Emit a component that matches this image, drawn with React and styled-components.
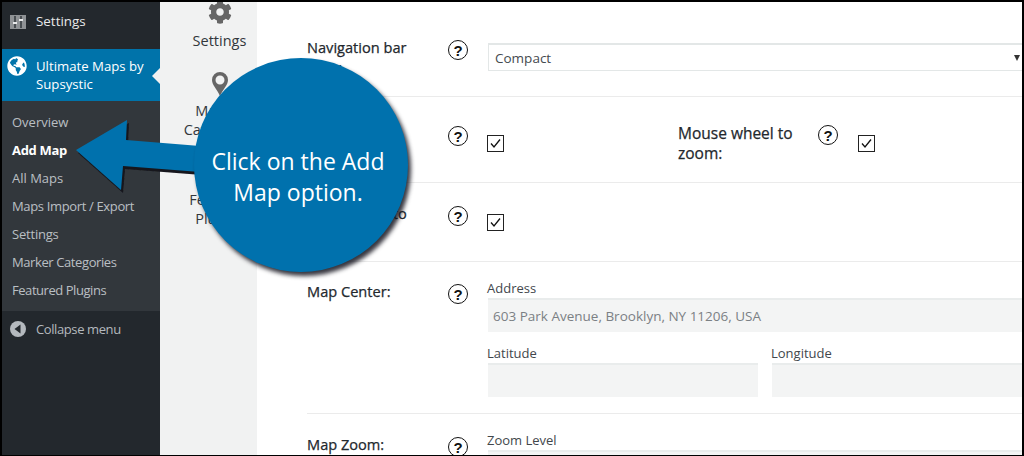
import styled, { createGlobalStyle } from 'styled-components';
import { FaCog, FaGlobeAmericas, FaStar } from 'react-icons/fa';

const Global = createGlobalStyle`
  * { box-sizing: border-box; }
  html, body { margin: 0; padding: 0; background: #fff; overflow: hidden; }
  body { font-family: "Open Sans", "Noto Sans", sans-serif; }
`;

// Outer frame with the black screenshot border
const Frame = styled.div`
  position: relative;
  width: 1024px;
  height: 456px;
  border: 2px solid #000;
  border-bottom-width: 1px;
  display: flex;
  overflow: hidden;
  background: #fff;
`;

const Sidebar = styled.nav`
  width: 158px;
  flex: none;
  background: #23282d;
  color: #eee;
  font-size: 13px;
`;

const TopItem = styled.div`
  height: 47px;
  display: flex;
  align-items: flex-start;
  padding: 10px 0 0 8px;
  gap: 10px;
  line-height: 18px;
  font-size: 13.400px;
  color: #e8e9ea;
`;

const ActiveItem = styled.div`
  position: relative;
  height: 52px;
  background: #0073aa;
  color: #fff;
  display: flex;
  padding: 8px 8px 0 5px;
  gap: 9px;
  line-height: 18px;
  font-size: 13.200px;
  svg { flex: none; margin-top: -1px; }
  &::after {
    content: "";
    position: absolute;
    right: 0;
    top: 19px;
    border: 8px solid transparent;
    border-right-color: #f1f1f1;
  }
`;

const SubMenu = styled.div`
  height: 210px;
  background: #32373c;
  padding: 7px 0;
`;

const SubItem = styled.div`
  height: 28px;
  line-height: 28px;
  padding-left: 10px;
  font-size: 13px;
  letter-spacing: ${p => p.$track || 0}px;
  font-weight: ${p => (p.$active ? 700 : 400)};
  color: ${p => (p.$active ? '#fff' : 'rgba(240,245,250,.72)')};
`;

const Collapse = styled.div`
  display: flex;
  align-items: center;
  gap: 10px;
  padding: 9px 0 0 8px;
  line-height: 18px;
  letter-spacing: -0.4px;
  color: #b4b9be;
`;

const SubNav = styled.aside`
  width: 97px;
  flex: none;
  background: #f1f2f2;
  font-size: 14.500px;
  line-height: 18.500px;
  text-align: center;
  padding-left: 22px;
`;

const NavEntry = styled.div`
  height: ${p => p.$h}px;
  margin-top: ${p => p.$top || 0}px;
  display: flex;
  flex-direction: column;
  align-items: center;
  color: #32373c;
  svg { color: #666; flex: none; }
`;

const NavLabel = styled.div`
  margin-top: ${p => p.$gap}px;
`;

const Main = styled.main`
  flex: 1;
  min-width: 0;
  padding-left: 50px;
  color: #23282d;
  font-size: 14.600px;
`;

const Row = styled.section`
  height: ${p => p.$h}px;
  padding-top: ${p => p.$pad}px;
  display: flex;
  border-bottom: ${p => (p.$last ? 'none' : '1px solid #ebebeb')};
`;

const Label = styled.div`
  width: 141px;
  flex: none;
  margin-top: ${p => p.$top || 0}px;
  line-height: 20px;
  color: #23282d;
  -webkit-text-stroke: 0.25px #23282d;
`;

const Help = styled.span`
  width: 20px;
  height: 20px;
  flex: none;
  margin-top: ${p => p.$top || 3}px;
  border: 1.500px solid #111;
  border-radius: 50%;
  display: flex;
  align-items: center;
  justify-content: center;
  font-family: "Liberation Sans", sans-serif;
  font-size: 15px;
  font-weight: 700;
  color: #111;
`;

const Control = styled.div`
  flex: 1;
  min-width: 0;
  margin-left: ${p => p.$left ?? 20}px;
  font-size: 13px;
`;

const Select = styled.div`
  height: 28px;
  margin-top: 6px;
  border: 1px solid #e3e7e7;
  border-top-width: 2px;
  border-right: none;
  padding-left: 6px;
  display: flex;
  align-items: center;
  justify-content: space-between;
  font-size: 13.500px;
  color: #454a4f;
`;

const Caret = styled.span`
  width: 0;
  height: 0;
  margin-right: 2px;
  border: 3.500px solid transparent;
  border-top: 6px solid #333;
  border-bottom: none;
`;

const CheckRow = styled.div`
  display: flex;
  align-items: flex-start;
`;

const Check = styled.span`
  width: 17px;
  height: 17px;
  flex: none;
  margin-top: ${p => p.$top}px;
  margin-left: ${p => p.$left || 0}px;
  border: 1px solid #222;
  background: #fff;
  display: flex;
  align-items: center;
  justify-content: center;
`;

const SideLabel = styled(Label)`
  width: 140px;
  margin-left: 174px;
  font-size: 15.500px;
`;

const FieldLabel = styled.div`
  margin-left: -1px;
  font-size: 13px;
  line-height: 18px;
  color: #42474c;
`;

const Field = styled.div`
  height: 34px;
  margin-top: 1px;
  background: #f3f4f4;
  border-top: 2px solid #e9ecec;
  padding: 0 0 0 5px;
  line-height: 33px;
  font-size: 13.500px;
  color: #7b8084;
`;

const Pair = styled.div`
  display: grid;
  grid-template-columns: 270px 1fr;
  column-gap: 14px;
  margin-top: 12px;
`;

// Callout drawn over the page
const Callout = styled.div`
  position: absolute;
  left: 192px;
  top: 56px;
  width: 214px;
  height: 214px;
  border-radius: 50%;
  background: #0071ad;
  box-shadow: 3px 4px 4px rgba(20, 20, 30, .85);
  display: flex;
  align-items: center;
  justify-content: center;
  text-align: center;
  color: #fff;
  font-size: 23px;
  line-height: 31px;
  padding: 24px 6px 0 0;
`;

const ArrowArt = styled.svg`
  position: absolute;
  left: -2px;
  top: -2px;
`;

function SettingsGlyph() {
  return (
    <svg width="16" height="14" viewBox="0 0 16 14" style={{ marginTop: 3 }}>
      <rect width="16" height="14" fill="#8f9295" />
      <path d="M5 1v12M11 1v12" stroke="#33383d" strokeWidth="1.500" />
      <path d="M3 8h4M9 5h4" stroke="#e8e9ea" strokeWidth="2" />
    </svg>
  );
}

function PinGlyph() {
  return (
    <svg width="16" height="24" viewBox="0 0 16 24">
      <path fillRule="evenodd" fill="#666" d="M8 0a8 8 0 0 1 8 8c0 5-5 9-8 16C5 17 0 13 0 8a8 8 0 0 1 8-8Zm0 3.500a4.500 4.500 0 1 0 0 9 4.500 4.500 0 0 0 0-9Z" />
    </svg>
  );
}

function CollapseGlyph() {
  return (
    <svg width="16" height="16" viewBox="0 0 16 16">
      <circle cx="8" cy="8" r="8" fill="#b4b9be" />
      <path d="M10.500 3.500v9L4.500 8Z" fill="#23282d" />
    </svg>
  );
}

function Tick() {
  return (
    <svg width="13" height="13" viewBox="0 0 13 13">
      <path d="M2 6.500 5 10 11 2.500" fill="none" stroke="#111" strokeWidth="1.300" />
    </svg>
  );
}

const arrow = 'M76 150 127 120 126 140 200 146 200 172 123 166 121 190Z';

function Arrow() {
  return (
    <ArrowArt width="240" height="220" viewBox="0 0 240 220">
      <defs>
        <filter id="soft"><feGaussianBlur stdDeviation="0.7" /></filter>
      </defs>
      <path d={arrow} fill="#15151c" transform="translate(2 3)" filter="url(#soft)" />
      <path d={arrow} fill="#0071ad" />
    </ArrowArt>
  );
}

export default function App() {
  return (
    <>
      <Global />
      <Frame>
        <Sidebar>
          <TopItem><SettingsGlyph />Settings</TopItem>
          <ActiveItem>
            <FaGlobeAmericas size={20} />
            <span>Ultimate Maps by Supsystic</span>
          </ActiveItem>
          <SubMenu>
            <SubItem>Overview</SubItem>
            <SubItem $active $track={-0.3}>Add Map</SubItem>
            <SubItem>All Maps</SubItem>
            <SubItem $track={-0.35}>Maps Import / Export</SubItem>
            <SubItem $track={-0.2}>Settings</SubItem>
            <SubItem $track={-0.4}>Marker Categories</SubItem>
            <SubItem $track={-0.45}>Featured Plugins</SubItem>
          </SubMenu>
          <Collapse><CollapseGlyph />Collapse menu</Collapse>
        </Sidebar>

        <SubNav>
          <NavEntry $h={60} $top={-2}>
            <FaCog size={24} />
            <NavLabel $gap={8}>Settings</NavLabel>
          </NavEntry>
          <NavEntry $h={87} $top={12}>
            <PinGlyph />
            <NavLabel $gap={6}>Marker<br />Categories</NavLabel>
          </NavEntry>
          <NavEntry $h={80}>
            <FaStar size={24} />
            <NavLabel $gap={8}>Featured<br />Plugins</NavLabel>
          </NavEntry>
        </SubNav>

        <Main>
          <Row $h={95} $pad={35}>
            <Label>Navigation bar<br />style:</Label>
            <Help>?</Help>
            <Control><Select>Compact<Caret /></Select></Control>
          </Row>
          <Row $h={86} $pad={26}>
            <Label>Street view<br />control:</Label>
            <Help>?</Help>
            <Control $left={19}>
              <CheckRow>
                <Check $top={12}><Tick /></Check>
                <SideLabel>Mouse wheel to<br />zoom:</SideLabel>
                <Help $top={2}>?</Help>
                <Check $top={12} $left={20}><Tick /></Check>
              </CheckRow>
            </Control>
          </Row>
          <Row $h={79} $pad={20}>
            <Label>Double click to<br />zoom:</Label>
            <Help>?</Help>
            <Control $left={19}><Check $top={11}><Tick /></Check></Control>
          </Row>
          <Row $h={152} $pad={17}>
            <Label $top={2}>Map Center:</Label>
            <Help $top={5}>?</Help>
            <Control>
              <FieldLabel>Address</FieldLabel>
              <Field>603 Park Avenue, Brooklyn, NY 11206, USA</Field>
              <Pair>
                <div><FieldLabel>Latitude</FieldLabel><Field /></div>
                <div><FieldLabel>Longitude</FieldLabel><Field /></div>
              </Pair>
            </Control>
          </Row>
          <Row $h={40} $pad={17} $last>
            <Label $top={3}>Map Zoom:</Label>
            <Help $top={6}>?</Help>
            <Control>
              <FieldLabel>Zoom Level</FieldLabel>
              <Field />
            </Control>
          </Row>
        </Main>

        <Arrow />
        <Callout>Click on the Add Map option.</Callout>
      </Frame>
    </>
  );
}
